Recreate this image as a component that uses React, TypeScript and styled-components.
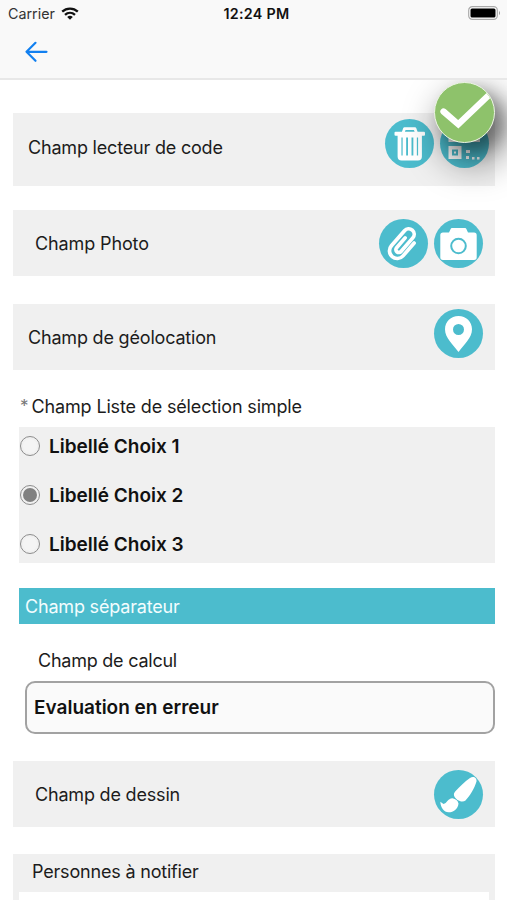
import React from "react";
import styled, { createGlobalStyle } from "styled-components";

const Global = createGlobalStyle`
  * { box-sizing: border-box; }
  body { margin: 0; background: #fff; overflow: hidden; }
`;

const Screen = styled.main`
  width: 507px;
  height: 900px;
  overflow: hidden;
  position: relative;
  display: flex;
  flex-direction: column;
  background: #fff;
  color: #1c1c1c;
  font-family: Inter, "Liberation Sans", sans-serif;
  font-size: 18px;
`;

const Header = styled.header`
  position: relative;
  z-index: 3;
  flex: none;
  height: 80px;
  background: #f9f9f9;
  border-bottom: 2px solid #e8e8e8;
`;

const StatusBar = styled.div`
  display: grid;
  grid-template-columns: 1fr auto 1fr;
  align-items: center;
  height: 26px;
  padding: 0 6px 0 8px;
`;

const Carrier = styled.span`
  display: flex;
  align-items: center;
  gap: 6px;
  padding-top: 1px;
  font-size: 14.3px;
  color: #333;
`;

const Clock = styled.span`
  padding: 1px 0 0 4px;
  font-size: 14.3px;
  font-weight: 600;
  letter-spacing: 0.3px;
  color: #111;
`;

const BatterySlot = styled.span`
  display: flex;
  justify-content: flex-end;
`;

const BackButton = styled.button`
  display: flex;
  margin: 14px 0 0 24px;
  padding: 0;
  border: 0;
  background: none;
`;

const Form = styled.div`
  display: flex;
  flex-direction: column;
  padding: 33px 12px 0 13px;
`;

const FieldRow = styled.section<{ $height: number; $gap: number; $inset: number; $right?: number; $lift?: number }>`
  flex: none;
  display: flex;
  align-items: center;
  justify-content: space-between;
  height: ${(p) => p.$height}px;
  margin-bottom: ${(p) => p.$gap}px;
  padding: 0 ${(p) => p.$right ?? 12}px ${(p) => p.$lift ?? 0}px ${(p) => p.$inset}px;
  background: #f0f0f0;
`;

const Label = styled.span<{ $track?: number }>`
  padding-top: 1px;
  line-height: 24px;
  white-space: nowrap;
  letter-spacing: ${(p) => p.$track ?? -0.19}px;
`;

const Actions = styled.div<{ $raise?: number }>`
  display: flex;
  gap: 6px;
  padding-bottom: ${(p) => p.$raise ?? 0}px;
`;

const RoundButton = styled.button`
  display: flex;
  width: 49px;
  height: 49px;
  padding: 0;
  border: 0;
  border-radius: 50%;
  background: #4cbccd;
`;

const ListLabel = styled.div`
  display: flex;
  height: 24px;
  margin: 0 0 9px 7px;
  gap: 3px;
`;

const Required = styled.span`
  color: #777;
  line-height: 24px;
  font-size: 17px;
`;

const Choices = styled.div`
  height: 136px;
  margin: 0 0 25px 6px;
  background: #f0f0f0;
`;

const Choice = styled.label`
  display: flex;
  align-items: center;
  gap: 9px;
  height: 39px;
  margin-bottom: 10px;
  padding-left: 1px;
  font-weight: 600;
  font-size: 19px;
  color: #111;
`;

const Radio = styled.span<{ $checked?: boolean }>`
  display: block;
  width: 20px;
  height: 20px;
  margin-bottom: 1px;
  border: 1.5px solid #8c8c8c;
  border-radius: 50%;
  padding: 2px;
  background: ${(p) => (p.$checked ? "#808080" : "#f4f4f4")};
  background-clip: content-box;
`;

const Separator = styled.div`
  display: flex;
  align-items: center;
  height: 36px;
  margin: 0 0 24px 6px;
  padding-left: 6px;
  background: #4cbccd;
  color: #f3fdfe;
`;

const CalcLabel = styled.div`
  display: flex;
  height: 33px;
  padding-left: 25px;
`;

const Result = styled.div`
  display: flex;
  align-items: center;
  height: 53px;
  margin: 0 0 27px 12px;
  padding-left: 7px;
  border: 2px solid #a2a2a2;
  border-radius: 10px;
  background: #fafafa;
  color: #111;
  font-weight: 600;
  font-size: 19px;
`;

const Notify = styled.section`
  height: 60px;
  padding: 5px 6px 0;
  background: #f0f0f0;
`;

const NotifyTitle = styled.div`
  display: flex;
  height: 33px;
  padding-left: 13px;
`;

const NotifyBox = styled.div`
  height: 22px;
  background: #fff;
`;

const Confirm = styled.button`
  position: absolute;
  z-index: 2;
  top: 82px;
  left: 434px;
  display: flex;
  width: 61px;
  height: 61px;
  padding: 0;
  overflow: hidden;
  border: 1.5px solid #edf5e5;
  border-radius: 50%;
  background: #8ec26b;
  box-shadow:
    9px 9px 16px 0 rgba(0, 0, 0, 0.32),
    10px 16px 34px 8px rgba(0, 0, 0, 0.36);
`;

const Wifi = () => (
  <svg width="18" height="13" viewBox="0 0 18 13" fill="none" stroke="#111" strokeWidth="2.3">
    <path d="M1.2 4.7C5.6.6 12.4.6 16.8 4.7" />
    <path d="M4 7.8c2.9-2.7 7.1-2.7 10 0" />
    <path d="M6.2 9.9c1.7-1.5 3.9-1.5 5.6 0L9 12.8Z" fill="#111" stroke="none" />
  </svg>
);

const Battery = () => (
  <svg width="33" height="14" viewBox="0 0 33 14">
    <rect x=".7" y=".7" width="28.6" height="12.6" rx="3.6" fill="#fff" stroke="#aaa" strokeWidth="1.2" />
    <rect x="2.5" y="2.5" width="25" height="9" rx="1.5" fill="#000" />
    <path d="M31 5c1.3.6 1.3 3.4 0 4Z" fill="#999" />
  </svg>
);

const Trash = () => (
  <svg width="49" height="49" viewBox="0 0 49 49">
    <path d="M18 14l1.5-4.3h10.500L31.500 14" fill="none" stroke="#fff" strokeWidth="2.8" strokeLinejoin="round" />
    <rect x="9.5" y="12.800" width="30.5" height="4" rx="1" fill="#fff" />
    <path d="M12.600 16h24.300v21.500q0 4-4 4h-16.300q-4 0-4-4Z" fill="#fff" />
    <path d="M16.400 18.500h16.700v18h-16.700Z" fill="#4cbccd" />
    <path d="M19.400 18v19M24.750 18v19M30.100 18v19" stroke="#fff" strokeWidth="3.500" />
  </svg>
);

const Scan = () => (
  <svg width="49" height="49" viewBox="0 0 49 49" fill="#fff">
    <path fillRule="evenodd" d="M8.500 27h13v13h-13ZM12 30.500v6h6v-6Z" />
    <path d="M14 32.500h2v2h-2ZM26 31h4v3h-4ZM26 37h3v3h-3ZM32 38h2.500v2.500h-2.500ZM37 38h2.500v2.500h-2.500Z" />
    <path fillRule="evenodd" d="M8.500 10h13v13h-13ZM12 13.500v6h6v-6ZM27 10h13v13h-13ZM30.500 13.500v6h6v-6Z" />
  </svg>
);

const Clip = () => (
  <svg width="49" height="49" viewBox="0 0 49 49" fill="none" stroke="#fff" strokeWidth="3.700" strokeLinecap="round">
    <path
      transform="translate(23.500 24.500) rotate(41)"
      d="M8.500-8V9A7.700 7.700 0 0 1-6.900 9V-11A5.500 5.500 0 0 1 4.100-11V7A2.900 2.900 0 0 1-1.700 7V-6"
    />
  </svg>
);

const Camera = () => (
  <svg width="49" height="49" viewBox="0 0 49 49">
    <path d="M9 13.500h6l1.500-3.300q.5-1.200 1.500-1.200h13q1 0 1.500 1.200l1.500 3.300H40q2.700 0 2.700 2.700v22q0 2.700-2.700 2.700H9q-2.700 0-2.700-2.700v-22q0-2.700 2.700-2.700Z" fill="#fff" />
    <circle cx="24.500" cy="27" r="7.300" fill="none" stroke="#4cbccd" strokeWidth="2" />
  </svg>
);

const Pin = () => (
  <svg width="49" height="49" viewBox="0 0 49 49">
    <path fillRule="evenodd" d="M24.500 7c-7.600 0-13.500 5.900-13.500 13.300 0 8.700 8 15.200 13.500 22.700C30 35.500 38 29 38 20.300 38 12.900 32.100 7 24.500 7Zm0 8a5.500 5.500 0 1 1 0 11 5.500 5.500 0 0 1 0-11Z" fill="#fff" />
  </svg>
);

const Brush = () => (
  <svg width="49" height="49" viewBox="0 0 49 49" fill="#fff">
    <path d="M36 8c3-2.500 7.200-.500 6.500 3.500-2 7-6.500 14-11 19-3 2.300-9.500.5-11.500-5-.3-1.500.2-2.700 1.200-3.900C25.500 16.500 30.500 12 36 8Z" />
    <path d="M18.500 28.300c3 .5 5.500 2.500 6 5.200-.5 6-5.500 9-10 8.800-4.500-.3-7.800-4-8.200-10.500l3.200 2.200c3.500-.5 4-5.500 9-5.700Z" />
  </svg>
);

export default function App() {
  return (
    <Screen>
      <Global />
      <Header>
        <StatusBar>
          <Carrier>Carrier <Wifi /></Carrier>
          <Clock>12:24 PM</Clock>
          <BatterySlot><Battery /></BatterySlot>
        </StatusBar>
        <BackButton aria-label="Retour">
          <svg width="24" height="24" viewBox="0 0 24 24" fill="none" stroke="#1280f0" strokeWidth="2.200" strokeLinecap="round" strokeLinejoin="round">
            <path d="M22.500 11.800H2.500M11.500 2.800l-9 9 9 9" />
          </svg>
        </BackButton>
      </Header>
      <Form>
        <FieldRow $height={73} $gap={24} $inset={15} $right={6} $lift={5}>
          <Label>Champ lecteur de code</Label>
          <Actions $raise={8}>
            <RoundButton aria-label="Supprimer"><Trash /></RoundButton>
            <RoundButton aria-label="Scanner"><Scan /></RoundButton>
          </Actions>
        </FieldRow>
        <FieldRow $height={66} $gap={28} $inset={22}>
          <Label $track={-0.12}>Champ Photo</Label>
          <Actions>
            <RoundButton aria-label="Joindre"><Clip /></RoundButton>
            <RoundButton aria-label="Photo"><Camera /></RoundButton>
          </Actions>
        </FieldRow>
        <FieldRow $height={66} $gap={24} $inset={15}>
          <Label>Champ de géolocation</Label>
          <Actions $raise={7}>
            <RoundButton aria-label="Localiser"><Pin /></RoundButton>
          </Actions>
        </FieldRow>
        <ListLabel><Required>*</Required><Label $track={-0.15}>Champ Liste de sélection simple</Label></ListLabel>
        <Choices>
          <Choice><Radio />Libellé Choix 1</Choice>
          <Choice><Radio $checked />Libellé Choix 2</Choice>
          <Choice><Radio />Libellé Choix 3</Choice>
        </Choices>
        <Separator><Label>Champ séparateur</Label></Separator>
        <CalcLabel><Label $track={-0.24}>Champ de calcul</Label></CalcLabel>
        <Result>Evaluation en erreur</Result>
        <FieldRow $height={66} $gap={27} $inset={22}>
          <Label>Champ de dessin</Label>
          <Actions>
            <RoundButton aria-label="Dessiner"><Brush /></RoundButton>
          </Actions>
        </FieldRow>
        <Notify>
          <NotifyTitle><Label>Personnes à notifier</Label></NotifyTitle>
          <NotifyBox />
        </Notify>
      </Form>
      <Confirm aria-label="Valider">
        <svg width="58" height="58" viewBox="0 0 58 58" fill="none" stroke="#fff" strokeWidth="6.300">
          <path d="M8.500 28.500 23.300 41.300 55 11" strokeLinecap="round" />
        </svg>
      </Confirm>
    </Screen>
  );
}
